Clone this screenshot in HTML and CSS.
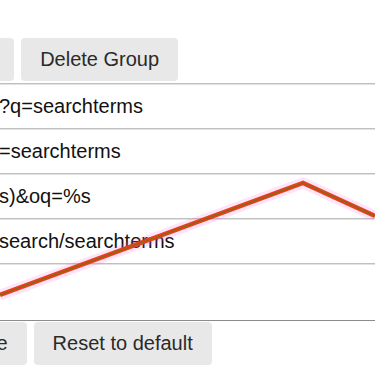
FILE: index.html
```html
<!DOCTYPE html>
<html>
<head>
<meta charset="utf-8">
<link rel="stylesheet" href="styles.css">
</head>
<body>
<div class="page">
  <div class="btn-row top-row">
    <button class="btn btn-cut-top">New Group</button>
    <button class="btn">Delete Group</button>
  </div>
  <div class="rows">
    <div class="row">?q=searchterms</div>
    <div class="row">=searchterms</div>
    <div class="row">s)&amp;oq=%s</div>
    <div class="row">search/searchterms</div>
    <div class="row row-tall"></div>
  </div>
  <div class="btn-row bottom-row">
    <button class="btn btn-cut-bottom">Save</button>
    <button class="btn">Reset to default</button>
  </div>
</div>
<svg class="overlay" width="375" height="366" viewBox="0 0 375 366">
  <polyline class="halo" points="0,295 303,183 375,216"/>
  <polyline class="line-red" points="0,295 303,183 375,216"/>
  <polyline class="line-core" points="0,295 303,183 375,216"/>
</svg>
</body>
</html>
```
FILE: styles.css
```css
html, body {
  margin: 0;
  padding: 0;
  background: #ffffff;
  overflow: hidden;
}
body {
  width: 375px;
  height: 366px;
  position: relative;
  font-family: "Liberation Sans", Arial, sans-serif;
  font-size: 20px;
  color: #1a1a1a;
}
.page {
  padding-top: 38px;
  width: 375px;
  overflow: hidden;
}
.btn-row {
  display: flex;
  gap: 7px;
  white-space: nowrap;
}
.top-row {
  margin-bottom: 2px;
}
.btn {
  flex: none;
  height: 43px;
  padding: 0 19px;
  border: none;
  border-radius: 4px;
  background: #e8e8e8;
  font-family: "Liberation Sans", Arial, sans-serif;
  font-size: 20px;
  color: #2a2a2a;
  line-height: 43px;
}
.btn-cut-top {
  margin-left: -125px;
}
.btn-cut-bottom {
  margin-left: -57px;
}
.rows {
  display: flex;
  flex-direction: column;
}
.row {
  height: 45px;
  box-sizing: border-box;
  border-top: 1px solid #c0c0c0;
  box-shadow: inset 0 1px 0 #e2e2e2;
  display: flex;
  align-items: center;
  margin-left: -1px;
  white-space: nowrap;
  color: #111;
}
.row-tall {
  height: 58px;
  border-bottom: 1px solid #8c8c8c;
}
.bottom-row {
  margin-top: 1px;
}
.overlay {
  position: absolute;
  left: 0;
  top: 0;
  pointer-events: none;
}
.overlay polyline {
  fill: none;
  stroke-linejoin: miter;
}
.halo {
  stroke: #ff66dd;
  stroke-opacity: 0.18;
  stroke-width: 11;
}
.line-red {
  stroke: #e8401a;
  stroke-width: 4.5;
}
.line-core {
  stroke: #86681a;
  stroke-width: 1.2;
}
```
